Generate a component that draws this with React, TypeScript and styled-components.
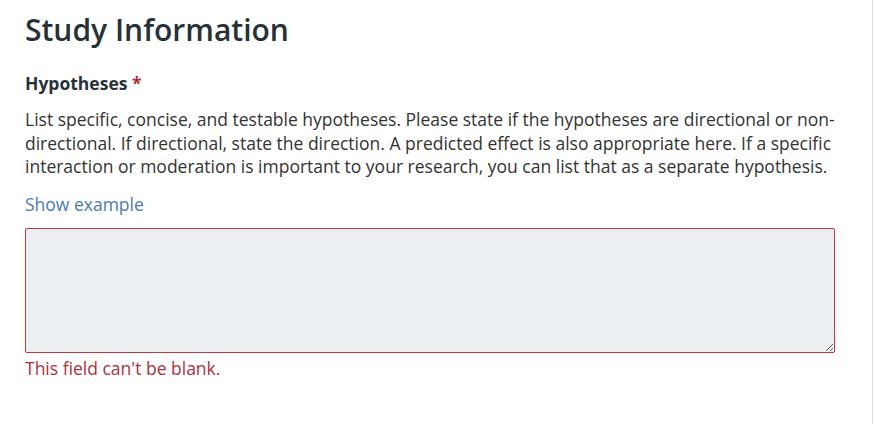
import React from "react";
import styled, { createGlobalStyle } from "styled-components";

const Global = createGlobalStyle`
  html, body { margin: 0; padding: 0; background: #fff; }
  body { font-family: "Open Sans", "Liberation Sans", sans-serif; color: #333; }
`;

const Panel = styled.div`
  box-sizing: border-box;
  width: 873px;
  min-height: 424px;
  border-right: 1px solid #ddd;
  padding: 10px 28px 0 25px;
`;

const Title = styled.h2`
  margin: 0 0 21px;
  font-size: 30px;
  font-weight: 600;
  line-height: 40px;
  color: #263238;
`;

const Label = styled.div`
  font-size: 17.5px;
  font-weight: 700;
  line-height: 24px;
  color: #263238;
  margin-bottom: 13px;
`;

const Req = styled.span`
  color: #b52c2c;
`;

const Help = styled.p`
  margin: 0 0 13px;
  font-size: 17.5px;
  line-height: 23.5px;
  color: #333;
`;

const Link = styled.a`
  display: inline-block;
  font-size: 17.5px;
  line-height: 24px;
  color: #4a7ab5;
  text-decoration: none;
  margin-bottom: 12px;
`;

const Area = styled.textarea`
  display: block;
  box-sizing: border-box;
  width: 810px;
  height: 125px;
  background: #eceff1;
  border: 1px solid #c0393b;
  border-radius: 2px;
  font-family: inherit;
  font-size: 16px;
  outline: none;
  resize: vertical;
`;

const Error = styled.div`
  font-size: 17.5px;
  line-height: 24px;
  color: #b0303a;
  margin-top: 3px;
`;

export default function App() {
  return (
    <>
      <Global />
      <Panel>
        <Title>Study Information</Title>
        <Label>
          Hypotheses <Req>*</Req>
        </Label>
        <Help>
          List specific, concise, and testable hypotheses. Please state if the hypotheses are directional or non-directional. If directional, state the direction. A predicted effect is also appropriate here. If a specific interaction or moderation is important to your research, you can list that as a separate hypothesis.
        </Help>
        <Link href="#">Show example</Link>
        <Area />
        <Error>This field can't be blank.</Error>
      </Panel>
    </>
  );
}
